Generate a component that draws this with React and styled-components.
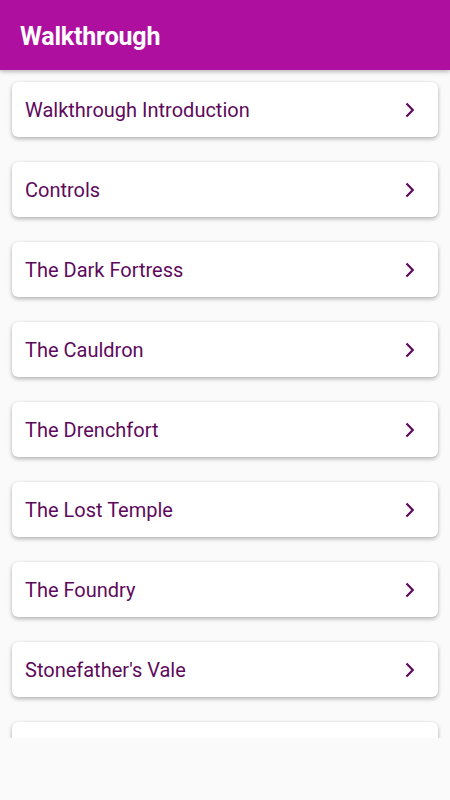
import React from 'react';
import styled, { createGlobalStyle } from 'styled-components';

const Global = createGlobalStyle`
	html, body {
		margin: 0;
		padding: 0;
		background: #fafafa;
		font-family: Roboto, "Noto Sans", sans-serif;
	}
`;

const Page = styled.div`
	width: 450px;
	height: 800px;
	display: flex;
	flex-direction: column;
	background: #fafafa;
`;

const AppBar = styled.header`
	height: 70px;
	flex-shrink: 0;
	background: #ae0f9e;
	display: flex;
	align-items: center;
	padding: 0 20px;
	box-shadow: 0 2px 4px rgba(0, 0, 0, 0.25);
	position: relative;
	z-index: 1;
`;

const Title = styled.h1`
	margin: 3px 0 0 0;
	color: #fff;
	font-size: 25px;
	font-weight: 700;
	letter-spacing: -0.2px;
`;

const List = styled.div`
	height: 668px;
	overflow: hidden;
	padding: 12px 12px 0 12px;
	display: flex;
	flex-direction: column;
	gap: 25px;
	box-sizing: border-box;
`;

const Card = styled.div`
	height: 55px;
	flex-shrink: 0;
	background: #fff;
	border-radius: 6px;
	box-shadow: 0 2px 4px rgba(0, 0, 0, 0.28), 0 0 2px rgba(0, 0, 0, 0.08);
	display: flex;
	align-items: center;
	justify-content: space-between;
	padding: 0 22px 0 13px;
`;

const Label = styled.span`
	color: #5e0a5c;
	font-size: 20px;
	margin-top: 1px;
`;

const Chevron = () => (
	<svg width="12" height="16" viewBox="0 0 12 16">
		<path d="M2.5 1.5 L8.8 8 L2.5 14.5" fill="none" stroke="#5e0a5c" strokeWidth="2.2" />
	</svg>
);

const items = [
	'Walkthrough Introduction',
	'Controls',
	'The Dark Fortress',
	'The Cauldron',
	'The Drenchfort',
	'The Lost Temple',
	'The Foundry',
	"Stonefather's Vale",
	'',
];

const App = () => {
	return (
		<Page>
			<Global />
			<AppBar>
				<Title>Walkthrough</Title>
			</AppBar>
			<List>
				{items.map((name, i) => (
					<Card key={i}>
						<Label>{name}</Label>
						<Chevron />
					</Card>
				))}
			</List>
		</Page>
	);
};

export default App;
